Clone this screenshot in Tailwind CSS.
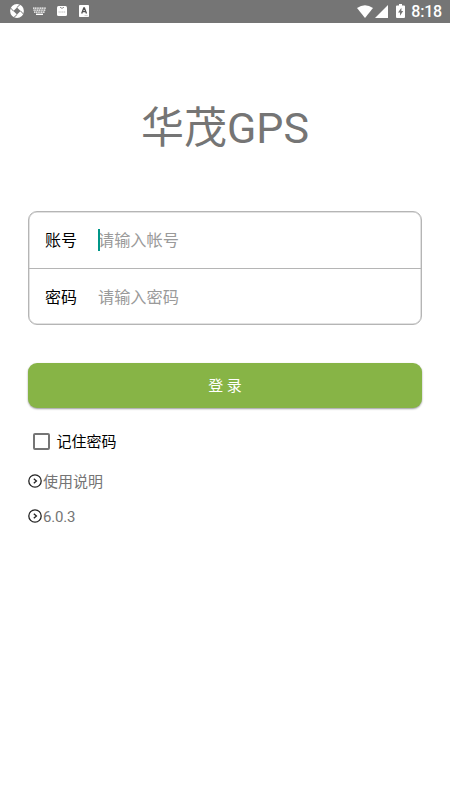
<!DOCTYPE html>
<html lang="zh-CN">
<head>
  <meta charset="UTF-8">
  <meta name="viewport" content="width=device-width, initial-scale=1.0">
  <title>华茂GPS</title>
  <script src="https://cdn.jsdelivr.net/npm/@tailwindcss/browser@4"></script>
</head>
<body class="h-screen overflow-hidden bg-white font-[Roboto,'Noto_Sans_CJK_SC',sans-serif] text-[#757575]">
  <!-- Status bar -->
  <header class="flex h-[22.5px] items-center justify-between bg-[#757575] pl-[10px] pr-2 text-white">
    <div class="flex items-center">
      <svg class="size-[14px]" viewBox="0 0 14 14">
        <circle cx="7" cy="7" r="6.9" fill="#fff"/>
        <path d="M7 3.4 10.6 7 7 10.6 3.4 7Z" fill="#757575"/>
        <path d="M3.6 7.2 .6 4M6.8 3.6 10 .6M10.4 6.8 13.4 10M7.2 10.4 4 13.4" stroke="#757575" stroke-width="1"/>
      </svg>
      <svg class="ml-[9px] h-[9px] w-[13px]" viewBox="0 0 13 9" fill="none" stroke="#fff">
        <path d="M0 1.2h13M0.5 3.2h12M1 5.2h11" stroke-width="1.3" stroke-dasharray="1.3 .45"/>
        <path d="M3 7.3h7" stroke-width="1.4"/>
      </svg>
      <svg class="ml-[11px] h-[10px] w-[10px]" viewBox="0 0 10 10" fill="none">
        <rect width="10" height="10" rx="1.5" fill="#fff"/>
        <path d="M3 1.2q2 2.4 4 0" stroke="#757575" stroke-width=".8"/>
        <path d="M1.5 6h7" stroke="#bbb" stroke-width="1" stroke-dasharray="1.3 .5"/>
      </svg>
      <svg class="ml-[12px] h-[12px] w-[10px]" viewBox="0 0 10 12" fill="none">
        <rect width="10" height="12" rx=".8" fill="#fff"/>
        <path d="m2.7 8.5 2.1-5.6h.6l2.1 5.6M3.5 6.7h3.2" stroke="#505050" stroke-width="1.3"/>
        <path d="M5.5 10.6h3.2" stroke="#bbb" stroke-width=".7"/>
      </svg>
    </div>
    <div class="flex items-center">
      <svg class="h-[13px] w-[16px]" viewBox="0 0 16 13" fill="#fff"><path d="M8 13 0 3Q8-2.7 16 3Z"/></svg>
      <svg class="ml-[2px] size-[13px]" viewBox="0 0 13 13" fill="#fff"><path d="M13 0v13H0Z"/></svg>
      <svg class="ml-[8px] h-[14px] w-[9px]" viewBox="0 0 9 14">
        <path d="M1 1.6h2V0h3v1.6h2q1 0 1 1V13q0 1-1 1H1q-1 0-1-1V2.6q0-1 1-1Z" fill="#fff"/>
        <path d="M5.4 3.8 2 8.4h2v3.3L7.2 7H5.4Z" fill="#757575"/>
      </svg>
      <span class="ml-[6px] mt-px text-[16px] leading-[22px] tracking-[-0.2px] font-medium">8:18</span>
    </div>
  </header>

  <main class="px-7">
    <h1 class="mt-[73px] text-center text-[43px] leading-[64px]">华茂GPS</h1>

    <!-- Credentials -->
    <form>
      <div class="mt-[51px] h-[114px] rounded-[9px] border-[1.5px] border-[#b5b5b5] text-[16px] shadow-[inset_0_0_0_0.5px_#c5c5c5]">
        <div class="flex h-[57px] items-center border-b-[1.5px] border-[#b5b5b5] pl-4 pt-[2px]">
          <label class="w-[53px] text-black">账号</label>
          <div class="relative text-[16.2px] leading-6 text-[#9a9a9a]">
            请输入帐号
            <span class="absolute left-0 top-0 h-[22px] w-[2px] bg-[#009688]"></span>
          </div>
        </div>
        <div class="flex h-[57px] items-center pl-4 pt-px">
          <label class="w-[53px] text-black">密码</label>
          <div class="text-[16.2px] leading-6 text-[#9a9a9a]">请输入密码</div>
        </div>
      </div>

      <button type="button" class="mt-[38px] block h-[45px] w-full rounded-[9px] bg-[#87b446] pt-[2px] text-[15px] text-white shadow-[0_1px_2px_rgba(0,0,0,0.4)]">登 录</button>

      <label class="mt-[21.5px] flex h-6 items-center pl-[4.5px] text-[15px] text-black">
        <span class="mr-[7px] size-[17px] rounded-[2px] border-2 border-[#757575]"></span>
        <span class="mt-[2px]">记住密码</span>
      </label>
    </form>

    <div class="mt-[16px] flex h-6 items-center text-[15px]">
      <svg class="mr-px size-[14px] -mt-px" viewBox="0 0 14 14" fill="none" stroke="#222" stroke-width="1.3">
        <circle cx="7" cy="7" r="6.2"/><path d="m5.8 4.8 2.6 2.2-2.6 2.2"/>
      </svg>
      <span class="mt-[2px]">使用说明</span>
    </div>
    <div class="mt-[11px] flex h-6 items-center text-[15px]">
      <svg class="mr-px size-[14px] -mt-px" viewBox="0 0 14 14" fill="none" stroke="#222" stroke-width="1.3">
        <circle cx="7" cy="7" r="6.2"/><path d="m5.8 4.8 2.6 2.2-2.6 2.2"/>
      </svg>
      <span class="mt-[2px] tracking-[-0.2px]">6.0.3</span>
    </div>
  </main>
</body>
</html>
